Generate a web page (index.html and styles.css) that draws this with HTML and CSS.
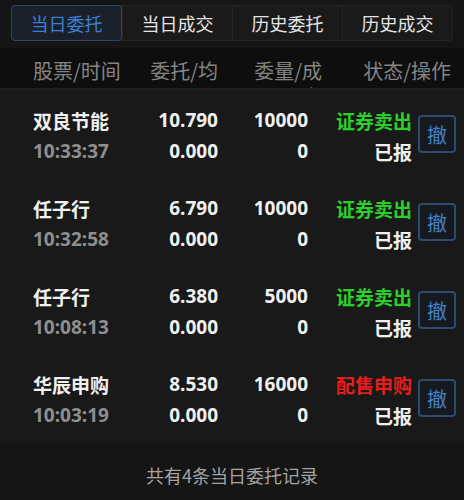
FILE: index.html
```html
<!DOCTYPE html>
<html lang="zh-CN">
<head>
  <meta charset="UTF-8">
  <meta name="viewport" content="width=device-width, initial-scale=1.0">
  <title>当日委托</title>
  <link rel="stylesheet" href="styles.css">
</head>
<body>
  <div class="top">
    <div class="tabs">
      <div class="tab attivo">当日委托</div>
      <div class="tab">当日成交</div>
      <div class="tab">历史委托</div>
      <div class="tab">历史成交</div>
    </div>
  </div>

  <div class="intestazione">
    <div class="c1">股票/时间</div>
    <div class="c2">委托/均价</div>
    <div class="c3">委量/成交</div>
    <div class="c4">状态/操作</div>
  </div>

  <div class="lista">
    <div class="riga">
      <div class="nome">双良节能</div>
      <div class="num">10.790</div>
      <div class="num">10000</div>
      <div class="stato verde">证券卖出</div>
      <button class="annulla">撤</button>
      <div class="ora">10:33:37</div>
      <div class="num">0.000</div>
      <div class="num">0</div>
      <div class="stato">已报</div>
    </div>
    <div class="riga">
      <div class="nome">任子行</div>
      <div class="num">6.790</div>
      <div class="num">10000</div>
      <div class="stato verde">证券卖出</div>
      <button class="annulla">撤</button>
      <div class="ora">10:32:58</div>
      <div class="num">0.000</div>
      <div class="num">0</div>
      <div class="stato">已报</div>
    </div>
    <div class="riga">
      <div class="nome">任子行</div>
      <div class="num">6.380</div>
      <div class="num">5000</div>
      <div class="stato verde">证券卖出</div>
      <button class="annulla">撤</button>
      <div class="ora">10:08:13</div>
      <div class="num">0.000</div>
      <div class="num">0</div>
      <div class="stato">已报</div>
    </div>
    <div class="riga">
      <div class="nome">华辰申购</div>
      <div class="num">8.530</div>
      <div class="num">16000</div>
      <div class="stato rosso">配售申购</div>
      <button class="annulla">撤</button>
      <div class="ora">10:03:19</div>
      <div class="num">0.000</div>
      <div class="num">0</div>
      <div class="stato">已报</div>
    </div>
  </div>

  <div class="piede">共有4条当日委托记录</div>
</body>
</html>
```

FILE: styles.css
```css
body {
  margin: 0;
  background-color: #151515;
  font-family: "Noto Sans", "Noto Sans CJK SC", sans-serif;
  color: #f0f0f0;
}
.top {
  padding: 5px 11px 7px;
}
.tabs {
  display: flex;
  background-color: #1a1a1a;
  border: 1px solid #262626;
  border-radius: 4px;
  height: 34px;
}
.tab {
  flex: 1;
  display: flex;
  align-items: center;
  justify-content: center;
  font-family: "Noto Sans CJK SC", sans-serif;
  font-size: 18px;
  color: #e4e4e4;
  border-left: 1px solid #262626;
}
.tab:first-child {
  border-left: none;
}
.tab.attivo {
  color: #3d7fd4;
  background-color: #1a212b;
  border: 1px solid #2b4566;
  border-radius: 4px;
  margin: -1px 0 -1px -1px;
}
.intestazione {
  display: grid;
  grid-template-columns: 105px 80px 104px 129px;
  padding: 10px 13px 0 33px;
  height: 30px;
  overflow: hidden;
  background-color: #0e0e0e;
  border-bottom: 2px solid #1d1d1d;
  font-family: "Noto Sans CJK SC", sans-serif;
  font-size: 20px;
  line-height: 26px;
  color: #858585;
}
.intestazione .c2,
.intestazione .c3,
.intestazione .c4 {
  text-align: right;
}
.intestazione .c3 {
  padding-left: 24px;
}
.lista {
  background-color: #191919;
}
.riga {
  display: grid;
  grid-template-columns: 105px 80px 90px 104px 38px;
  grid-template-rows: 31px 31px;
  column-gap: 0;
  padding: 15px 8px 10px 33px;
  border-bottom: 1px solid #151515;
  font-size: 19px;
  font-weight: bold;
  line-height: 31px;
}
.nome,
.stato {
  font-family: "Noto Sans CJK SC", sans-serif;
}
.ora {
  color: #8e8e8e;
}
.num,
.stato {
  text-align: right;
}
.verde {
  color: #2bcf2b;
}
.rosso {
  color: #e61e1e;
}
.annulla {
  grid-column: 5;
  grid-row: 1 / 3;
  align-self: center;
  width: 38px;
  height: 38px;
  margin: 0 0 4px 6px;
  padding: 0;
  background-color: #16191e;
  border: 2px solid #2e4c72;
  border-radius: 4px;
  color: #4680cc;
  font-family: "Noto Sans CJK SC", sans-serif;
  font-size: 20px;
}
.riga .ora,
.riga .ora ~ .num,
.riga .ora ~ .stato {
  grid-row: 2;
}
.piede {
  text-align: center;
  padding-top: 20px;
  font-family: "Noto Sans CJK SC", sans-serif;
  font-size: 18px;
  color: #a3a3a3;
}
```
